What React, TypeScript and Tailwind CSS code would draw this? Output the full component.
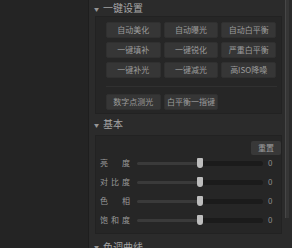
import React from 'react';

const font = { fontFamily: '"Noto Sans CJK SC", "Noto Sans", sans-serif' };

function Btn({ label }: { label: string }) {
  return (
    <div className="h-[16px] flex items-center justify-center whitespace-nowrap bg-[#363636] border border-[#303030] rounded-[2px] text-[8px] leading-none text-[#9c9c9c]">
      {label}
    </div>
  );
}

function Header({ title, className = '' }: { title: string; className?: string }) {
  return (
    <div className={`flex items-center pl-[5px] gap-[4px] text-[10px] leading-none text-[#a6a6a6] ${className}`}>
      <span className="text-[5px] text-[#969696]">▼</span>
      <span>{title}</span>
    </div>
  );
}

function SliderRow({ label }: { label: string }) {
  const chars = label.split('');
  return (
    <div className="h-[19px] flex items-center">
      <div className="w-[30px] flex justify-between text-[8px] leading-none text-[#9a9a9a]">
        {chars.map((c, i) => (
          <span key={i}>{c}</span>
        ))}
      </div>
      <div className="relative ml-[7px] w-[126px] h-[5px] flex items-center">
        <div className="w-[63px] h-[3px] bg-[#3a3a3a] rounded-l-full" />
        <div className="flex-1 h-[5px] bg-[#1b1b1b] rounded-r-full" />
        <div className="absolute left-[60px] top-[-3px] w-[6px] h-[10px] bg-[#bdbdbd] rounded-b-[3px] rounded-t-[1px]" />
      </div>
      <span className="ml-[5px] text-[8px] leading-none text-[#8e8e8e]">0</span>
    </div>
  );
}

export default function App() {
  const rows = [
    ['自动美化', '自动曝光', '自动白平衡'],
    ['一键填补', '一键锐化', '严重白平衡'],
    ['一键补光', '一键减光', '高ISO降噪'],
  ];

  return (
    <div className="w-[292px] h-[248px] flex overflow-hidden bg-[#242424]" style={font}>
      {/* Left canvas */}
      <div className="w-[89px] bg-[#242424] border-r border-[#1e1e1e]" />

      {/* Panel */}
      <div className="flex-1 flex bg-[#2b2b2b]">
        <div className="w-[194px] flex flex-col">
          <Header title="一键设置" className="h-[17px]" />
          <div className="ml-[6px] mr-[1px] h-[100px] bg-[#262626] border border-[#222222] pl-[10px] pr-[6px] pt-[5px]">
            <div className="grid grid-cols-3 gap-x-[3px] gap-y-[4px] w-[170px]">
              {rows.flat().map((l) => (
                <Btn key={l} label={l} />
              ))}
            </div>
            <div className="mt-[8px] h-px w-[171px] bg-[#303030]" />
            <div className="mt-[7px] grid grid-cols-3 gap-x-[3px] w-[170px]">
              <Btn label="数字点测光" />
              <Btn label="白平衡一指键" />
            </div>
          </div>

          <Header title="基本" className="h-[22px]" />
          <div className="ml-[6px] mr-[1px] h-[102px] bg-[#262626] border border-[#222222] pl-[4px] pt-[5px]">
            <div className="flex justify-end">
              <div className="w-[30px] h-[14px] flex items-center justify-center bg-[#383838] rounded-[2px] text-[8px] leading-none text-[#9c9c9c]">
                重置
              </div>
            </div>
            <div className="mt-[-1px]">
              <SliderRow label="亮度" />
              <SliderRow label="对比度" />
              <SliderRow label="色相" />
              <SliderRow label="饱和度" />
            </div>
          </div>

          <Header title="色调曲线" className="h-[14px] pt-[11px]" />
        </div>

        {/* Scrollbar */}
        <div className="w-[8px] pl-[2px]">
          <div className="w-[4px] h-[218px] bg-[#363636] border-l border-[#474747]" />
        </div>
      </div>
    </div>
  );
}
